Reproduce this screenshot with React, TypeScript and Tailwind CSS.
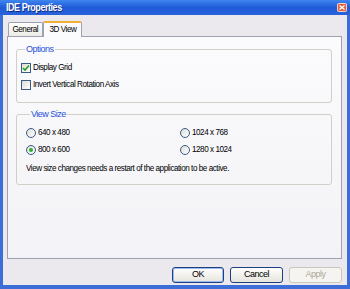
import { useState } from 'react'

const font = { fontFamily: '"Liberation Sans", Arial, sans-serif' }
const label = 'text-[9px] text-black tracking-[-0.5px] scale-x-[0.9] origin-left whitespace-nowrap'

function Check({ checked, text }: { checked: boolean; text: string }) {
  return (
    <div className="flex items-center h-[12px] gap-[2px]">
      <span className="w-[10px] h-[10px] shrink-0 border border-[#3a5b86] bg-gradient-to-br from-[#dcdcd6] to-[#ffffff] flex items-center justify-center">
        {checked && (
          <svg width="8" height="8" viewBox="0 0 8 8">
            <path d="M1 4 L3 6 L7 1.5" fill="none" stroke="#21a121" strokeWidth="1.6" />
          </svg>
        )}
      </span>
      <span className={label}>{text}</span>
    </div>
  )
}

function Radio({ checked, text }: { checked: boolean; text: string }) {
  return (
    <div className="flex items-center h-[12px] gap-[2px]">
      <span className="w-[10px] h-[10px] shrink-0 rounded-full border border-[#3a5b86] bg-gradient-to-br from-[#dcdcd6] to-[#ffffff] flex items-center justify-center">
        {checked && <span className="w-[4px] h-[4px] rounded-full bg-[#2fae2f]" />}
      </span>
      <span className={label}>{text}</span>
    </div>
  )
}

function Group({ title, className, children }: { title: string; className: string; children: React.ReactNode }) {
  return (
    <fieldset className={`border border-[#d0d0c8] rounded-[3px] ${className}`}>
      <legend className="ml-[4px] px-[1px] text-[9px] text-[#1f4fd8] leading-[10px] tracking-[-0.5px]">{title}</legend>
      {children}
    </fieldset>
  )
}

export default function App() {
  const [tab] = useState('3D View')

  return (
    <div className="w-[350px] h-[289px] flex flex-col bg-[#3d6ed8] overflow-hidden" style={font}>
      <div className="h-[15px] flex items-center justify-between pl-[6px] pr-[3px] bg-gradient-to-b from-[#3f86f0] via-[#1f5ad8] to-[#2a62dc]">
        <span className="text-white font-bold text-[10px] tracking-[-0.5px] scale-x-[0.9] origin-left [text-shadow:1px_1px_0_#0a2a80]">IDE Properties</span>
        <span className="w-[10px] h-[9px] rounded-[2px] bg-[#e0603a] border border-white/70 flex items-center justify-center">
          <svg width="6" height="5" viewBox="0 0 6 5">
            <path d="M0.5 0.5 L5.5 4.5 M5.5 0.5 L0.5 4.5" stroke="white" strokeWidth="1.3" />
          </svg>
        </span>
      </div>

      <div className="flex-1 mx-[3px] mb-[4px] bg-[#ece9ee] flex flex-col">
        <div className="flex items-end pl-[5px] pt-[5px] h-[21px]">
          <div className="w-[35px] h-[14px] flex items-center justify-center border border-b-0 border-[#9ca2b0] rounded-t-[2px] bg-gradient-to-b from-white to-[#ecebe6]">
            <span className="text-[9px] text-black tracking-[-0.5px] scale-x-[0.9]">General</span>
          </div>
          <div className="w-[39px] h-[16px] -mb-[1px] relative z-10 flex items-center justify-center border border-b-0 border-[#9ca2b0] border-t-2 border-t-[#f0b035] rounded-t-[2px] bg-[#fbfbfd]">
            <span className="text-[9px] text-black tracking-[-0.5px] scale-x-[0.9]">{tab}</span>
          </div>
        </div>

        <div className="ml-[4px] mr-[5px] h-[223px] border border-[#9ca2b0] bg-gradient-to-b from-[#fbfbfd] to-[#f3f3f7] pt-[7px] pl-[8px] pr-[9px] flex flex-col gap-[6px]">
          <Group title="Options" className="h-[59px] pl-[4px] pt-[8px] flex flex-col gap-[5px]">
            <Check checked text="Display Grid" />
            <Check checked={false} text="Invert Vertical Rotation Axis" />
          </Group>
          <Group title="View Size" className="h-[76px] pl-[9px] pt-[8px]">
            <div className="grid grid-cols-[154px_1fr] gap-y-[5px]">
              <Radio checked={false} text="640 x 480" />
              <Radio checked={false} text="1024 x 768" />
              <Radio checked text="800 x 600" />
              <Radio checked={false} text="1280 x 1024" />
            </div>
            <p className={`mt-[6px] ${label}`}>
              View size changes needs a restart of the application to be active.
            </p>
          </Group>
        </div>

        <div className="flex justify-end gap-[6px] mr-[5px] mt-[8px]">
          <button className="w-[52px] h-[16px] rounded-[3px] border border-[#1b3f80] bg-gradient-to-b from-white to-[#e6e4dc] shadow-[inset_0_0_0_1px_#9bbcf0] text-[9px] text-black tracking-[-0.5px]">
            OK
          </button>
          <button className="w-[53px] h-[16px] rounded-[3px] border border-[#1b3f80] bg-gradient-to-b from-white to-[#e6e4dc] text-[9px] text-black tracking-[-0.5px]">
            Cancel
          </button>
          <button className="w-[53px] h-[16px] rounded-[3px] border border-[#cac8bb] bg-[#f5f4f0] text-[9px] text-[#aca899] tracking-[-0.5px]">
            Apply
          </button>
        </div>
      </div>
    </div>
  )
}
